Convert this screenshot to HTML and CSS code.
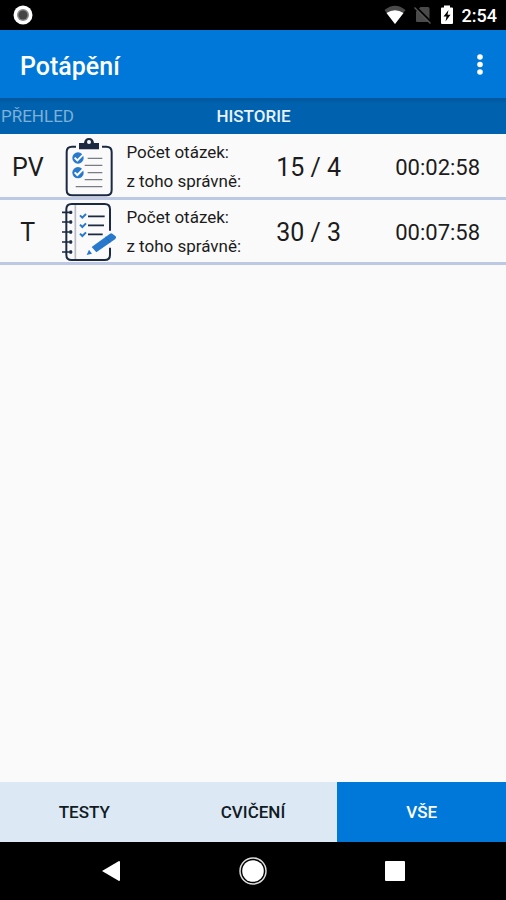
FILE: index.html
```html
<!DOCTYPE html>
<html lang="cs">
  <head>
    <meta charset="UTF-8" />
    <meta name="viewport" content="width=device-width, initial-scale=1.0" />
    <title>Potápění</title>
    <link rel="stylesheet" href="styles.css" />
  </head>
  <body>
    <div class="status-bar">
      <svg class="status-record" width="20" height="20" viewBox="0 0 20 20">
        <circle cx="10" cy="10" r="9.5" fill="#fff" />
        <circle cx="10" cy="10" r="6" fill="#8a8a8a" />
        <circle cx="10" cy="10" r="4.500" fill="#444" />
      </svg>
      <svg width="22" height="20" viewBox="0 0 22 20">
        <path d="M0.5 5 Q11 -3.5 21.5 5 L11 19 Z" fill="#4a4a4a" />
        <path d="M2.500 8 Q11 2.500 19.500 8 L11 19 Z" fill="#fff" />
      </svg>
      <svg width="18" height="20" viewBox="0 0 18 20">
        <path d="M6.5 2 H14 Q15.5 2 15.5 3.5 V17 H3 Q2 17 2 16 V6.5 Z" fill="#4a4a4a" />
        <path d="M2 2 L17.5 17.5" stroke="#000" stroke-width="2" />
        <path d="M0.5 2.5 L16.5 18.5" stroke="#555" stroke-width="1.5" />
      </svg>
      <svg width="14" height="20" viewBox="0 0 14 20">
        <path d="M4 0.5 H10 V2.5 H12 Q13 2.5 13 3.5 V18 Q13 19 12 19 H2 Q1 19 1 18 V3.5 Q1 2.5 2 2.5 H4 Z" fill="#fff" />
        <path d="M8.5 5 L3.5 11.5 H6.5 L5.5 16.5 L10.5 9.8 H7.5 Z" fill="#000" />
      </svg>
      <span class="clock">2:54</span>
    </div>

    <header class="app-bar">
      <h1 class="title">Potápění</h1>
      <button type="button" class="menu-button" aria-label="Menu">
        <svg width="6" height="22" viewBox="0 0 6 22">
          <circle cx="3" cy="4" r="2.8" fill="#fff" />
          <circle cx="3" cy="11.5" r="2.8" fill="#fff" />
          <circle cx="3" cy="19" r="2.8" fill="#fff" />
        </svg>
      </button>
    </header>

    <nav class="tabs">
      <a href="#prehled" class="tab">PŘEHLED</a>
      <a href="#historie" class="tab active">HISTORIE</a>
    </nav>

    <main class="content">
      <table class="history">
        <tr>
          <td class="kind">PV</td>
          <td class="picture">
            <svg width="56" height="60" viewBox="184 19 168 180" fill="none">
              <path d="M229 48 H217 Q201 48 201 64 V178 Q201 194 217 194 H320 Q336 194 336 178 V64 Q336 48 320 48 H307" stroke="#1b2a41" stroke-width="6" />
              <path d="M238 37 H253 Q255 22 268 22 Q281 22 283 37 H298 V56 H238 Z" fill="#1b2a41" />
              <circle cx="268" cy="34" r="6" fill="#fafafa" />
              <circle cx="235" cy="82" r="17" fill="#2878cc" />
              <circle cx="235" cy="126" r="17" fill="#2878cc" />
              <path d="M225 81 L233 89 L251 71 M225 125 L233 133 L251 115" stroke="#fff" stroke-width="6" />
              <path d="M264 83 H308 M255 104 H308 M264 126 H308 M255 147 H308 M228 168 H308" stroke="#777c85" stroke-width="4" />
            </svg>
          </td>
          <td class="labels">Počet otázek:<br />z toho správně:</td>
          <td class="score">15 / 4</td>
          <td class="time">00:02:58</td>
        </tr>
        <tr>
          <td class="kind">T</td>
          <td class="picture">
            <svg width="56" height="60" viewBox="184 214 168 180" fill="none">
              <path d="M331 300 V236 Q331 220 315 220 H216 Q200 220 200 236 V372 Q200 388 216 388 H315 Q331 388 331 372 V351" stroke="#1b2a41" stroke-width="6" />
              <path d="M227 223 V385" stroke="#b9bcc2" stroke-width="5" />
              <path d="M187 245 H218 M187 274 H218 M187 304 H218 M187 334 H218 M187 364 H218" stroke="#1b2a41" stroke-width="5" />
              <path d="M213 240 V250 M213 269 V279 M213 299 V309 M213 329 V339 M213 359 V369" stroke="#1b2a41" stroke-width="7" />
              <path d="M241 254 L248 261 L259 250 M241 282 L248 289 L259 278 M241 309 L248 316 L259 305" stroke="#2878cc" stroke-width="6" />
              <path d="M265 257 H315 M265 284 H313 M265 311 H309" stroke="#1b2a41" stroke-width="5" />
              <path d="M276 349 L331 309 Q335 306 338 309 L348 317 Q351 321 347 325 L290 365 Z" fill="#2878cc" />
              <path d="M318 318 L331 336" stroke="#1d61ab" stroke-width="2" />
              <path d="M268 357 L261 373 L277 369 Z" fill="#2878cc" />
            </svg>
          </td>
          <td class="labels">Počet otázek:<br />z toho správně:</td>
          <td class="score">30 / 3</td>
          <td class="time">00:07:58</td>
        </tr>
      </table>
    </main>

    <div class="filters">
      <button type="button" class="filter">TESTY</button>
      <button type="button" class="filter">CVIČENÍ</button>
      <button type="button" class="filter active">VŠE</button>
    </div>

    <div class="nav-bar">
      <button type="button" class="nav-button" aria-label="Zpět">
        <svg width="20" height="22" viewBox="0 0 20 22">
          <path d="M1 11 L18 1 Q19 1 19 2 V20 Q19 21 18 21 Z" fill="#fff" />
        </svg>
      </button>
      <button type="button" class="nav-button" aria-label="Domů">
        <svg width="28" height="28" viewBox="0 0 28 28">
          <circle cx="14" cy="14" r="13" fill="none" stroke="#ddd" stroke-width="1.5" />
          <circle cx="14" cy="14" r="10.8" fill="#fff" />
        </svg>
      </button>
      <button type="button" class="nav-button" aria-label="Přehled aplikací">
        <svg width="20" height="20" viewBox="0 0 20 20">
          <rect width="20" height="20" rx="1" fill="#fff" />
        </svg>
      </button>
    </div>
  </body>
</html>
```

FILE: styles.css
```css
* {
  box-sizing: border-box;
}
body {
  margin: 0;
  min-height: 100vh;
  display: flex;
  flex-direction: column;
  font-family: Roboto, sans-serif;
  background-color: #fafafa;
  color: #1c1c1c;
}
button {
  border: none;
  padding: 0;
  background: none;
  font-family: inherit;
  cursor: pointer;
}
svg {
  display: block;
}
.status-bar {
  display: flex;
  align-items: center;
  gap: 8px;
  height: 30px;
  padding: 0 9px 0 13px;
  background-color: #000;
}
.status-record {
  margin-right: auto;
}
.clock {
  color: #fff;
  font-size: 18px;
  font-weight: 500;
}
.app-bar {
  display: flex;
  align-items: center;
  justify-content: space-between;
  height: 68px;
  padding: 0 16px 0 20px;
  background-color: #0078d9;
}
.title {
  margin: 0;
  padding-top: 4px;
  color: #fff;
  font-size: 25px;
  font-weight: 500;
}
.menu-button {
  display: flex;
  justify-content: center;
  width: 20px;
}
.tabs {
  display: grid;
  grid-template-columns: 1fr auto 1fr;
  align-items: center;
  height: 36px;
  background: linear-gradient(#00569c, #0062ae 6px);
}
.tab {
  padding-left: 1px;
  color: #7fb0d8;
  font-size: 17px;
  text-decoration: none;
}
.tab.active {
  color: #e9f2fb;
  font-weight: 500;
}
.content {
  flex: 1;
  padding-top: 1px;
}
.history {
  width: 100%;
  table-layout: fixed;
  border-collapse: separate;
  border-spacing: 0;
}
.history td {
  height: 65px;
  padding: 2px 0 0;
  border-bottom: 3px solid #bcc8e4;
  text-align: center;
}
.history .kind {
  width: 11%;
  font-size: 25px;
}
.history .picture {
  width: 13%;
}
.picture svg {
  margin: 0 auto;
}
.history .labels {
  width: 25%;
  padding-left: 5px;
  font-size: 17px;
  line-height: 29px;
  text-align: left;
  white-space: nowrap;
}
.history .score {
  width: 24%;
  font-size: 25px;
}
.history .time {
  width: 27%;
  font-size: 22px;
}
.filters {
  display: grid;
  grid-template-columns: repeat(3, 1fr);
  height: 60px;
}
.filter {
  background-color: #dce9f5;
  color: #111b24;
  font-size: 17px;
  font-weight: 500;
}
.filter.active {
  background-color: #0078d9;
  color: #fff;
}
.nav-bar {
  display: flex;
  align-items: center;
  justify-content: center;
  height: 58px;
  background-color: #000;
}
.nav-button {
  display: flex;
  justify-content: center;
  width: 28%;
}
```
